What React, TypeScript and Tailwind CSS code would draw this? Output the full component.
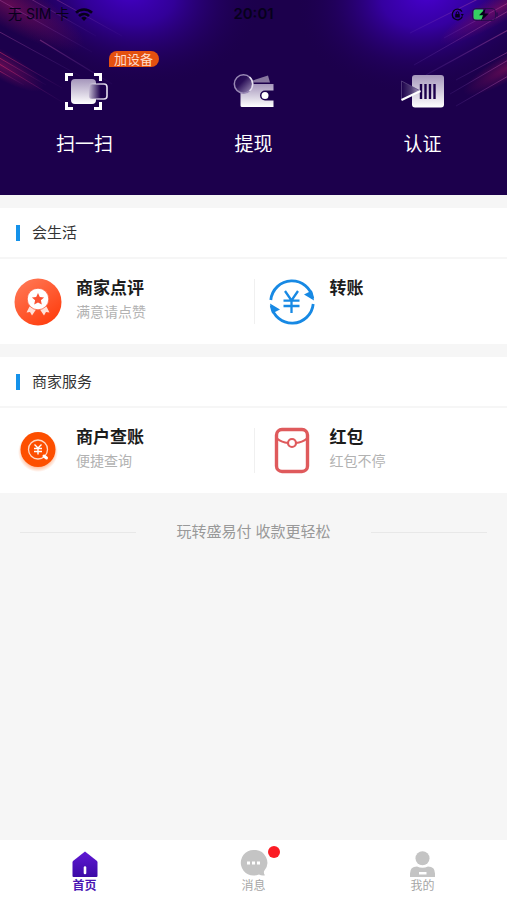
import type { ReactNode } from 'react';

function HeaderBackdrop() {
  return (
    <svg className="absolute inset-0 h-full w-full" viewBox="0 0 507 195" preserveAspectRatio="none" aria-hidden="true">
      <defs>
        <radialGradient id="glowLeft" gradientUnits="userSpaceOnUse" cx="0" cy="0" r="1" gradientTransform="translate(128 -10) rotate(12) scale(135 95)">
          <stop offset="0" stopColor="#4400c8" />
          <stop offset="0.35" stopColor="#3800ac" stopOpacity="0.8" />
          <stop offset="0.7" stopColor="#2a0078" stopOpacity="0.35" />
          <stop offset="1" stopColor="#1c004c" stopOpacity="0" />
        </radialGradient>
        <radialGradient id="glowRight" gradientUnits="userSpaceOnUse" cx="0" cy="0" r="1" gradientTransform="translate(428 -8) rotate(-14) scale(135 100)">
          <stop offset="0" stopColor="#4800d0" />
          <stop offset="0.35" stopColor="#3a00b0" stopOpacity="0.85" />
          <stop offset="0.7" stopColor="#2a0078" stopOpacity="0.35" />
          <stop offset="1" stopColor="#1c004c" stopOpacity="0" />
        </radialGradient>
        <radialGradient id="pinkHaze">
          <stop offset="0" stopColor="#a0145a" stopOpacity="0.5" />
          <stop offset="1" stopColor="#a0145a" stopOpacity="0" />
        </radialGradient>
        <linearGradient id="streakLeft" x1="0" y1="0" x2="1" y2="1">
          <stop offset="0" stopColor="#b04a9c" stopOpacity="0.45" />
          <stop offset="1" stopColor="#7a4ac0" stopOpacity="0.05" />
        </linearGradient>
        <linearGradient id="streakRight" x1="0" y1="1" x2="1" y2="0">
          <stop offset="0" stopColor="#7a4ac0" stopOpacity="0.15" />
          <stop offset="1" stopColor="#c0509c" stopOpacity="0.5" />
        </linearGradient>
        <linearGradient id="emberLeft" x1="0" y1="0" x2="1" y2="1">
          <stop offset="0" stopColor="#d02860" stopOpacity="0.65" />
          <stop offset="1" stopColor="#7a2a90" stopOpacity="0.05" />
        </linearGradient>
      </defs>
      <rect width="507" height="195" fill="#1c004c" />
      <rect width="507" height="195" fill="url(#glowLeft)" />
      <rect width="507" height="195" fill="url(#glowRight)" />
      <ellipse cx="0" cy="0" rx="85" ry="24" transform="translate(10 4) rotate(30)" fill="url(#pinkHaze)" />
      <ellipse cx="0" cy="0" rx="50" ry="14" transform="translate(0 64) rotate(30)" fill="url(#pinkHaze)" />
      <ellipse cx="0" cy="0" rx="70" ry="14" transform="translate(500 8) rotate(-30)" fill="url(#pinkHaze)" />
      <ellipse cx="0" cy="0" rx="50" ry="13" transform="translate(507 68) rotate(-30)" fill="url(#pinkHaze)" />
      <g stroke="url(#streakLeft)" strokeWidth="1">
        <path d="M50 -4L122 36" />
        <path d="M22 -6L96 36" />
        <path d="M-4 -2L92 52" />
        <path d="M40 40L112 84" strokeWidth="1.200" />
        <path d="M-4 30L80 76" />
      </g>
      <g stroke="url(#emberLeft)" strokeWidth="1">
        <path d="M-4 50L62 88" />
        <path d="M-4 56L46 85" />
        <path d="M-4 62L62 102" />
        <path d="M-4 69L24 85" />
      </g>
      <g stroke="url(#streakRight)" strokeWidth="1">
        <path d="M410 33L488 -6" />
        <path d="M414 65L510 10" />
        <path d="M444 38L510 2" />
        <path d="M426 75L510 29" strokeWidth="1.200" />
        <path d="M456 80L510 51" />
        <path d="M450 94L510 59" />
        <path d="M456 106L510 75" />
      </g>
    </svg>
  );
}

function StatusBar() {
  return (
    <div className="flex h-7 items-center px-2 text-[#07001c]">
      <div className="flex flex-1 items-center gap-1.5 text-[14px] leading-5">
        <span>无 SIM 卡</span>
        <svg width="18" height="13" viewBox="0 0 18 13" aria-label="Wi-Fi">
          <g fill="none" stroke="currentColor" strokeWidth="2.6">
            <path d="M1 4.800a11.400 11.400 0 0 1 16 0" />
            <path d="M4 8a7.200 7.200 0 0 1 10 0" />
          </g>
          <path d="M6.200 10a4 4 0 0 1 5.600 0L9 13z" fill="currentColor" />
        </svg>
      </div>
      <time className="font-['Inter'] text-[15px] leading-5 font-semibold">20:01</time>
      <div className="flex flex-1 items-center justify-end gap-2">
        <svg width="13" height="13" viewBox="0 0 13 13" fill="none" stroke="currentColor" aria-hidden="true">
          <path d="M11 3.600A5.300 5.300 0 1 0 11.400 8.600" strokeWidth="1.300" />
          <path d="M9.800 6h3l-1.500 2.200z" fill="currentColor" stroke="none" />
          <rect x="4.200" y="6" width="4.600" height="3.500" rx="0.600" fill="currentColor" stroke="none" />
          <path d="M5.200 6V5a1.300 1.300 0 0 1 2.600 0v1" />
        </svg>
        <svg width="27" height="13" viewBox="0 0 27 13" aria-hidden="true">
          <rect x="0.500" y="0.500" width="23" height="12" rx="3.500" fill="none" stroke="#2a0a50" />
          <path d="M3.500 1.500H11v10H3.500A2 2 0 0 1 1.500 9.500V3.500a2 2 0 0 1 2-2z" fill="#35d062" />
          <path d="M13.500 0.500L7 7.200h4L9 12.800l8-7.300h-4.500z" fill="currentColor" />
          <path d="M25 4.500v4" stroke="#2a0a50" strokeWidth="1.500" />
        </svg>
      </div>
    </div>
  );
}

function ScanIcon() {
  return (
    <svg width="48" height="48" viewBox="0 0 48 48" fill="none" aria-hidden="true">
      <defs>
        <linearGradient id="scanBody" x1="0" y1="0" x2="0" y2="1">
          <stop offset="0" stopColor="#a596bb" />
          <stop offset="1" stopColor="#fff" />
        </linearGradient>
        <linearGradient id="scanLens" x1="0" y1="0" x2="1" y2="0">
          <stop offset="0" stopColor="#c4bad2" />
          <stop offset="0.650" stopColor="#1c004c" />
        </linearGradient>
        <linearGradient id="scanEdge" x1="0" y1="0" x2="1" y2="0">
          <stop offset="0" stopColor="#fff" stopOpacity="0" />
          <stop offset="0.500" stopColor="#e6e0f0" stopOpacity="0.800" />
          <stop offset="1" stopColor="#e6e0f0" />
        </linearGradient>
      </defs>
      <path d="M5.500 14V7.500H12M33 7.500h6.500V14M5.500 35v6.500H12M33 41.500h6.500V35" stroke="#fff" strokeWidth="3" />
      <rect x="10" y="12" width="25" height="25" rx="4" fill="url(#scanBody)" />
      <rect x="28" y="17" width="18" height="15" rx="3" fill="url(#scanLens)" stroke="url(#scanEdge)" strokeWidth="1.600" />
    </svg>
  );
}

function WalletIcon() {
  return (
    <svg width="48" height="48" viewBox="0 0 48 48" fill="none" aria-hidden="true">
      <defs>
        <linearGradient id="walletBody" x1="0" y1="0" x2="0" y2="1">
          <stop offset="0" stopColor="#a596bb" />
          <stop offset="1" stopColor="#fff" />
        </linearGradient>
        <linearGradient id="walletCoin" x1="0" y1="0" x2="1" y2="1">
          <stop offset="0" stopColor="#1c004c" />
          <stop offset="0.400" stopColor="#2a0f58" />
          <stop offset="1" stopColor="#a99bc0" />
        </linearGradient>
      </defs>
      <path d="M21 14L38 8.500L40 15.500H21z" fill="#87769f" />
      <path d="M10.500 17H43.500V23.500H35a5 5 0 0 0 0 10H43.500V40H12a1.500 1.500 0 0 1-1.500-1.500z" fill="url(#walletBody)" />
      <circle cx="35" cy="28.500" r="3.500" fill="#fff" />
      <circle cx="13.500" cy="17" r="9.200" fill="url(#walletCoin)" stroke="#9888b4" strokeWidth="1.500" />
      <path d="M19.500 10a9.200 9.200 0 0 1 0 14" stroke="#e4deee" strokeWidth="1.500" />
    </svg>
  );
}

function VerifyIcon() {
  return (
    <svg width="48" height="48" viewBox="0 0 48 48" fill="none" aria-hidden="true">
      <defs>
        <linearGradient id="verifyBody" x1="0" y1="0" x2="0" y2="1">
          <stop offset="0" stopColor="#a596bb" />
          <stop offset="1" stopColor="#fff" />
        </linearGradient>
        <linearGradient id="verifyArrow" x1="0" y1="0" x2="1" y2="0">
          <stop offset="0" stopColor="#1c004c" />
          <stop offset="0.500" stopColor="#4d3a72" />
          <stop offset="1" stopColor="#b5a9c8" />
        </linearGradient>
      </defs>
      <rect x="13" y="8" width="32" height="32.500" rx="3" fill="url(#verifyBody)" />
      <path d="M22 17v15M26.500 17v15M31 17v15M35.500 17v15" stroke="#1c004c" strokeWidth="2.400" />
      <path d="M2.500 14L21.500 24L2.500 33z" fill="url(#verifyArrow)" stroke="#5a4580" strokeWidth="0.800" />
      <path d="M2.500 33L21.500 24" stroke="#fff" strokeWidth="2" />
    </svg>
  );
}

function ReviewIcon() {
  return (
    <svg width="48" height="48" viewBox="0 0 48 48" aria-hidden="true">
      <defs>
        <linearGradient id="reviewDisc" x1="0.100" y1="0" x2="0.800" y2="1">
          <stop offset="0" stopColor="#ff7a58" />
          <stop offset="1" stopColor="#ff3c0c" />
        </linearGradient>
      </defs>
      <circle cx="24" cy="24" r="23.500" fill="url(#reviewDisc)" />
      <path d="M15.500 28.500L12.500 34.500L16 34L18 37.500L22 31.500zM32.500 28.500L35.500 34.500L32 34L30 37.500L26 31.500z" fill="#ffe0d8" />
      <circle cx="24" cy="21" r="10.800" fill="#fff" stroke="#fc5a38" strokeWidth="0.800" />
      <path d="M24 15l1.800 4 4.300.4-3.200 2.900.9 4.300-3.800-2.200-3.800 2.200.9-4.300-3.200-2.900 4.300-.4z" fill="#fb5232" />
    </svg>
  );
}

function TransferIcon() {
  return (
    <svg width="48" height="48" viewBox="0 0 48 48" fill="none" stroke="#1789e4" aria-hidden="true">
      <path d="M2.800 22A21.200 21.200 0 0 1 44.800 20.500M45.200 26A21.200 21.200 0 0 1 3.200 27.500" strokeWidth="2.800" />
      <path d="M46 22.500L36 16.500L44 12.500zM2 25.500L12 31.500L4 35.500z" fill="#1789e4" stroke="none" />
      <path d="M17 13L23.500 22.500L30 13M15.500 22.700H31.500M15.500 28H31.500M23.500 22.500V35" strokeWidth="2.300" />
    </svg>
  );
}

function LedgerIcon() {
  return (
    <svg width="48" height="48" viewBox="0 0 48 48" fill="none" aria-hidden="true">
      <defs>
        <radialGradient id="ledgerShade">
          <stop offset="0.750" stopColor="#ff8a50" stopOpacity="0.550" />
          <stop offset="1" stopColor="#ff8a50" stopOpacity="0" />
        </radialGradient>
      </defs>
      <circle cx="24" cy="25" r="20" fill="url(#ledgerShade)" />
      <circle cx="24" cy="22.500" r="17.500" fill="#fd4f00" />
      <circle cx="24" cy="22.500" r="9.500" stroke="#ffd9c4" strokeWidth="1.300" />
      <path d="M20.500 17.500L24 21L27.500 17.500M20 21.500H28M20 24.500H28M24 21V27.500" stroke="#fff" strokeWidth="1.400" />
      <path d="M30 29L32.500 31" stroke="#fff" strokeWidth="3" strokeLinecap="round" />
    </svg>
  );
}

function EnvelopeIcon() {
  return (
    <svg width="48" height="48" viewBox="0 0 48 48" fill="none" stroke="#df5a5c" aria-hidden="true">
      <rect x="8.500" y="2.500" width="31" height="42" rx="5.500" strokeWidth="3.400" />
      <path d="M9 11.500Q14 15.500 20 16M28 16Q34 15.500 39 11.500" strokeWidth="2.200" />
      <circle cx="24" cy="16" r="4" strokeWidth="2.200" />
    </svg>
  );
}

function HomeIcon() {
  return (
    <svg width="28" height="28" viewBox="0 0 28 28" aria-hidden="true">
      <defs>
        <linearGradient id="homeFill" x1="0" y1="0" x2="0" y2="1">
          <stop offset="0" stopColor="#6018d4" />
          <stop offset="1" stopColor="#3c0aa6" />
        </linearGradient>
      </defs>
      <path d="M14 1.500L26 11Q26.500 11.500 26.500 12.500V26Q26.500 27 25.500 27H2.500Q1.500 27 1.500 26V12.500Q1.500 11.500 2 11z" fill="url(#homeFill)" />
      <path d="M14 17.500V23" stroke="#fff" strokeWidth="2.600" strokeLinecap="round" />
    </svg>
  );
}

function MessageIcon() {
  return (
    <svg width="28" height="28" viewBox="0 0 28 28" aria-hidden="true">
      <path d="M13.500 0a12.800 12.800 0 1 0 5.500 24.400c1.500 1 3.500 1.300 6 .9-1-1-1.300-2.300-1-4A12.800 12.800 0 0 0 13.500 0z" fill="#c4c4c4" />
      <path d="M7 11.500h3v3H7zM12 11.500h3v3h-3zM17 11.500h3v3h-3z" fill="#fff" />
    </svg>
  );
}

function ProfileIcon() {
  return (
    <svg width="28" height="28" viewBox="0 0 28 28" aria-hidden="true">
      <circle cx="13.500" cy="8.300" r="7" fill="#c4c4c4" />
      <path d="M1 27V23.500Q1 16.500 8 16.500Q13.500 19 19 16.500Q26 16.500 26 23.500V27z" fill="#c4c4c4" />
      <path d="M10 22h7.500v2.500H10z" fill="#fff" />
    </svg>
  );
}

function QuickAction({ label, icon, badge }: { label: string; icon: ReactNode; badge?: string }) {
  return (
    <button type="button" className="flex flex-col items-center gap-[18px] text-[19px] leading-6 text-white">
      <span className="relative">
        {icon}
        {badge && (
          <span className="absolute -top-4 left-12 h-4 w-[50px] rounded-t-full rounded-r-full rounded-bl-none bg-[#e4500f] text-center text-[13px] leading-4 whitespace-nowrap text-[#ffdccb]">
            {badge}
          </span>
        )}
      </span>
      {label}
    </button>
  );
}

interface Service {
  title: string;
  note?: string;
  icon: ReactNode;
}

function ServiceSection({ heading, services }: { heading: string; services: Service[] }) {
  return (
    <section className="bg-white">
      <div className="flex h-[51px] items-center gap-3 border-b-2 border-[#f6f6f6] px-4">
        <span className="h-4 w-1 bg-[#1592ea]" />
        <h2 className="text-[15px] leading-5 text-[#333]">{heading}</h2>
      </div>
      <div className="relative grid grid-cols-2 pt-[19px] pb-[18px]">
        {services.map((service) => (
          <button key={service.title} type="button" className="flex items-start gap-[14px] pl-[14px] text-left">
            {service.icon}
            <span className="flex flex-col gap-1">
              <span className="text-[17px] leading-5 font-bold text-[#1c1c1c]">{service.title}</span>
              {service.note && <span className="text-[14px] leading-5 text-[#b2b2b2]">{service.note}</span>}
            </span>
          </button>
        ))}
        <span className="absolute inset-y-5 left-1/2 w-px bg-[#f0f0f0]" />
      </div>
    </section>
  );
}

function Tab({ label, icon, active, unread }: { label: string; icon: ReactNode; active?: boolean; unread?: boolean }) {
  return (
    <a
      href="#"
      aria-current={active ? 'page' : undefined}
      className={`flex flex-col items-center text-[12px] leading-4 ${active ? 'font-bold text-[#4a16b4]' : 'text-[#a6a6a6]'}`}
    >
      <span className="relative">
        {icon}
        {unread && <span className="absolute -top-1 -right-3 size-3 rounded-full bg-[#fb1c24]" />}
      </span>
      {label}
    </a>
  );
}

export default function App() {
  return (
    <div className="flex min-h-screen flex-col bg-[#f6f6f6] font-['Inter','Noto_Sans_CJK_SC',sans-serif]">
      <header className="relative bg-[#1c004c]">
        <HeaderBackdrop />
        <div className="relative">
          <StatusBar />
          <div className="grid grid-cols-3 pt-[39px] pb-[38px]">
            <QuickAction label="扫一扫" icon={<ScanIcon />} badge="加设备" />
            <QuickAction label="提现" icon={<WalletIcon />} />
            <QuickAction label="认证" icon={<VerifyIcon />} />
          </div>
        </div>
      </header>

      <main className="flex flex-col gap-[13px] pt-[13px]">
        <ServiceSection
          heading="会生活"
          services={[
            { title: '商家点评', note: '满意请点赞', icon: <ReviewIcon /> },
            { title: '转账', icon: <TransferIcon /> },
          ]}
        />
        <ServiceSection
          heading="商家服务"
          services={[
            { title: '商户查账', note: '便捷查询', icon: <LedgerIcon /> },
            { title: '红包', note: '红包不停', icon: <EnvelopeIcon /> },
          ]}
        />
        <div className="flex items-center gap-10 px-5 pt-4">
          <span className="h-px flex-1 bg-[#e8e8e8]" />
          <p className="text-[15px] leading-5 text-[#999]">玩转盛易付 收款更轻松</p>
          <span className="h-px flex-1 bg-[#e8e8e8]" />
        </div>
      </main>

      <nav className="mt-auto grid h-[60px] grid-cols-3 bg-white pt-[10px]">
        <Tab label="首页" icon={<HomeIcon />} active />
        <Tab label="消息" icon={<MessageIcon />} unread />
        <Tab label="我的" icon={<ProfileIcon />} />
      </nav>
    </div>
  );
}
